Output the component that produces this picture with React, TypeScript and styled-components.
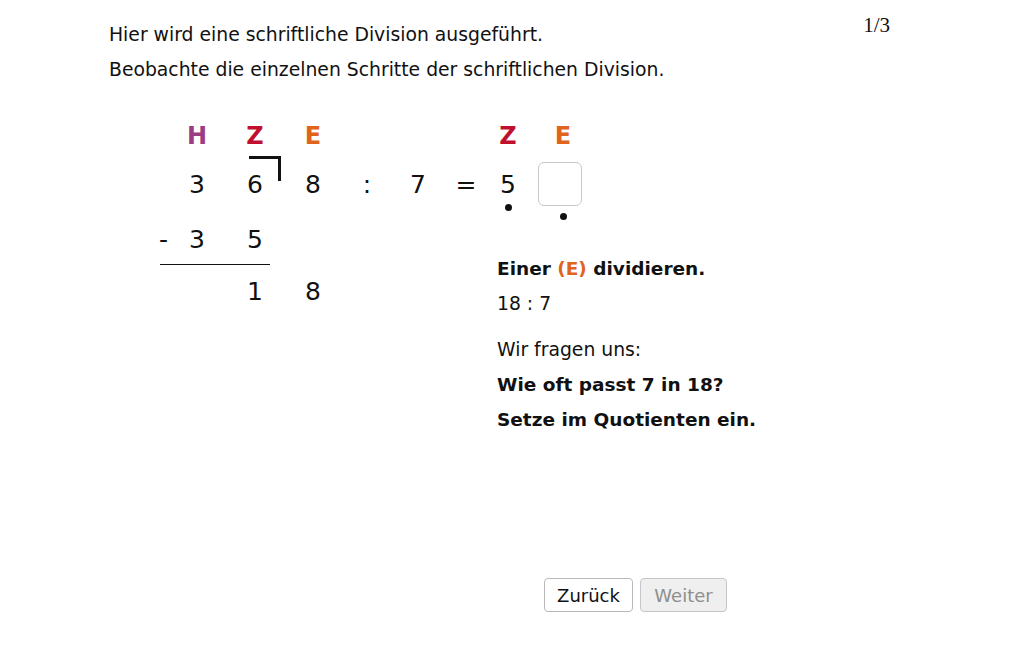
import React from 'react';
import styled, { createGlobalStyle } from 'styled-components';

const GlobalStyle = createGlobalStyle`
  html, body {
    margin: 0;
    padding: 0;
    background: #ffffff;
  }
  body {
    font-family: "DejaVu Sans", Verdana, sans-serif;
    color: #111;
  }
`;

const colors = {
  H: '#9b3d84',
  Z: '#c0102e',
  E: '#e0641c',
};

const Page = styled.div`
  width: 1032px;
  height: 645px;
  padding: 17px 0 0 109px;
  box-sizing: border-box;
  display: flex;
  flex-direction: column;
`;

const Header = styled.header`
  display: flex;
  justify-content: space-between;
  align-items: flex-start;
  padding-right: 142px;
`;

const Intro = styled.div`
  font-size: 18.8px;
  line-height: 35px;
`;

const PageCounter = styled.div`
  font-family: "Liberation Serif", "Times New Roman", serif;
  font-size: 21px;
  margin-top: -4px;
`;

const DivisionGrid = styled.div`
  margin: 27px 0 0 31px;
  display: grid;
  grid-template-columns: 30px 54px 62px 54px 54px 48px 48px 36px 68px 1fr;
  grid-template-rows: 40px 60px 50px 54px auto;
  align-items: center;
  font-size: 25px;
`;

const PlaceLabel = styled.div<{ $place: 'H' | 'Z' | 'E'; $col: number; $shift?: number }>`
  grid-row: 1;
  grid-column: ${(p) => p.$col};
  justify-self: center;
  margin: 4px 0 0 ${(p) => p.$shift || 0}px;
  font-weight: bold;
  font-size: 24px;
  color: ${(p) => colors[p.$place]};
`;

const Cell = styled.div<{ $row: number; $col: number; $align?: string }>`
  grid-row: ${(p) => p.$row};
  grid-column: ${(p) => p.$col};
  justify-self: ${(p) => p.$align || 'center'};
  line-height: 1;
`;

const Minus = styled(Cell)`
  padding-right: 2px;
`;

const Slot = styled.div<{ $col: number }>`
  grid-row: 2;
  grid-column: ${(p) => p.$col};
  align-self: stretch;
  display: flex;
  align-items: center;
  justify-content: center;
  position: relative;
  line-height: 1;
`;

const Bracket = styled.span`
  position: absolute;
  left: 25px;
  top: 2px;
  width: 29px;
  height: 22px;
  border-top: 3px solid #111;
  border-right: 3px solid #111;
`;

const Dot = styled.span<{ $top: number; $shift?: number }>`
  position: absolute;
  top: ${(p) => p.$top}px;
  left: calc(50% - 3px + ${(p) => p.$shift || 0}px);
  width: 7px;
  height: 7px;
  border-radius: 50%;
  background: #111;
`;

const AnswerBox = styled.div`
  width: 42px;
  height: 42px;
  border: 1.5px solid #c9c9c9;
  border-radius: 6px;
  background: #fff;
`;

const RuleLine = styled.div`
  grid-row: 4;
  grid-column: 1 / 4;
  align-self: start;
  margin: 0 16px 0 20px;
  border-top: 1.5px solid #111;
`;

const Explanation = styled.div`
  grid-row: 3 / span 3;
  grid-column: 8 / -1;
  align-self: start;
  padding: 37px 0 0 7px;
  font-size: 18.8px;
  line-height: 35px;
`;

const Line = styled.div<{ $bold?: boolean; $gapAfter?: boolean }>`
  font-weight: ${(p) => (p.$bold ? 'bold' : 'normal')};
  font-size: ${(p) => (p.$bold ? '18.5px' : 'inherit')};
  margin-bottom: ${(p) => (p.$gapAfter ? '11px' : '0')};
`;

const Accent = styled.span`
  color: ${colors.E};
`;

const ButtonRow = styled.div`
  margin: 141px 0 0 435px;
  display: flex;
  gap: 7px;
`;

const NavButton = styled.button<{ $width: number }>`
  width: ${(p) => p.$width}px;
  height: 34px;
  font-family: "DejaVu Sans", Verdana, sans-serif;
  font-size: 18px;
  color: #111;
  background: #fff;
  border: 1px solid #b9b9b9;
  border-radius: 4px;
  padding: 0;
  &:disabled {
    color: #8e8e8e;
    background: #efefef;
    border-color: #c6c6c6;
  }
`;

export default function App() {
  return (
    <>
      <GlobalStyle />
      <Page>
        <Header>
          <Intro>
            <div>Hier wird eine schriftliche Division ausgeführt.</div>
            <div>Beobachte die einzelnen Schritte der schriftlichen Division.</div>
          </Intro>
          <PageCounter>1/3</PageCounter>
        </Header>

        <DivisionGrid>
          <PlaceLabel $place="H" $col={2}>H</PlaceLabel>
          <PlaceLabel $place="Z" $col={3}>Z</PlaceLabel>
          <PlaceLabel $place="E" $col={4}>E</PlaceLabel>
          <PlaceLabel $place="Z" $col={8}>Z</PlaceLabel>
          <PlaceLabel $place="E" $col={9} $shift={6}>E</PlaceLabel>

          <Cell $row={2} $col={2}>3</Cell>
          <Slot $col={3}>
            6
            <Bracket />
          </Slot>
          <Cell $row={2} $col={4}>8</Cell>
          <Cell $row={2} $col={5}>:</Cell>
          <Cell $row={2} $col={6}>7</Cell>
          <Cell $row={2} $col={7}>=</Cell>
          <Slot $col={8}>
            5
            <Dot $top={50} />
          </Slot>
          <Slot $col={9}>
            <AnswerBox />
            <Dot $top={59} $shift={3} />
          </Slot>

          <Minus $row={3} $col={1} $align="end">-</Minus>
          <Cell $row={3} $col={2}>3</Cell>
          <Cell $row={3} $col={3}>5</Cell>

          <RuleLine />
          <Cell $row={4} $col={3}>1</Cell>
          <Cell $row={4} $col={4}>8</Cell>

          <Explanation>
            <Line $bold>
              Einer <Accent>(E)</Accent> dividieren.
            </Line>
            <Line $gapAfter>18 : 7</Line>
            <Line>Wir fragen uns:</Line>
            <Line $bold>Wie oft passt 7 in 18?</Line>
            <Line $bold>Setze im Quotienten ein.</Line>
          </Explanation>
        </DivisionGrid>

        <ButtonRow>
          <NavButton $width={89}>Zurück</NavButton>
          <NavButton $width={87} disabled>
            Weiter
          </NavButton>
        </ButtonRow>
      </Page>
    </>
  );
}
